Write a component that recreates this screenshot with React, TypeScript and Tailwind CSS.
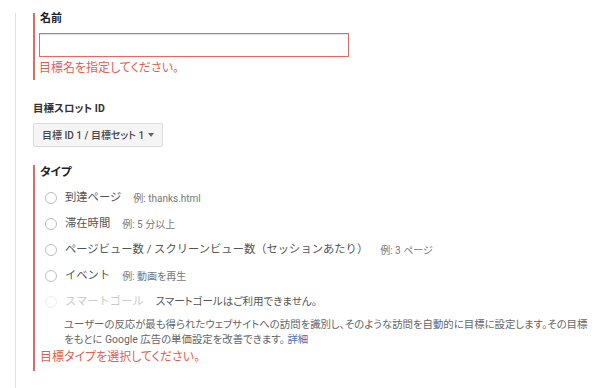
const font = "font-['Roboto','Noto_Sans_CJK_JP',sans-serif] [font-feature-settings:'palt']"

type Choice = { label: string; hint?: string; disabled?: boolean }

const choices: Choice[] = [
  { label: '到達ページ', hint: '例: thanks.html' },
  { label: '滞在時間', hint: '例: 5 分以上' },
  { label: 'ページビュー数 / スクリーンビュー数（セッションあたり）', hint: '例: 3 ページ' },
  { label: 'イベント', hint: '例: 動画を再生' },
  { label: 'スマートゴール', hint: 'スマートゴールはご利用できません。', disabled: true },
]

function Radio({ disabled }: { disabled?: boolean }) {
  return (
    <span
      className={
        disabled
          ? 'size-[12px] shrink-0 rounded-full border-[1.5px] border-[#ededed]'
          : 'size-[12px] shrink-0 rounded-full border-[1.5px] border-[#bdbdbd]'
      }
    />
  )
}

export default function App() {
  return (
    <div className={`${font} h-[388px] w-[600px] overflow-hidden bg-white pt-[13px] pl-[15px]`}>
      <div className="h-full border-l border-[#e0e0e0] pl-[17px]">
        {/* 名前 */}
        <section className="border-l-2 border-[#e8685d] pb-[3px] pl-[4px]">
          <p className="pl-[1px] text-[11px] leading-[12px] font-bold text-[#222]">名前</p>
          <input
            aria-label="名前"
            className="mt-[8px] block h-[24px] w-[310px] border border-[#e8685d] bg-white shadow-[inset_0_1px_1px_rgba(0,0,0,0.12)] outline-none"
          />
          <p className="mt-[2px] text-[12px] leading-[18px] text-[#e45e52]">目標名を指定してください。</p>
        </section>

        {/* 目標スロット ID */}
        <p className="mt-[22px] text-[10.5px] leading-[14px] font-bold text-[#333]">目標スロット ID</p>
        <button className="mt-[7px] flex h-[24px] w-[130px] items-center justify-between rounded-[2px] border border-[#dcdcdc] bg-[#f5f5f5] pr-[8px] pl-[8px] text-[10px] font-medium whitespace-nowrap text-[#444]">
          <span>目標 ID 1 / 目標セット 1</span>
          <span className="h-0 w-0 border-x-[3.5px] border-t-[4px] border-x-transparent border-t-[#666]" />
        </button>

        {/* タイプ */}
        <section className="mt-[18px] border-l-2 border-[#e8685d] pb-[5px] pl-[5px]">
          <p className="text-[11.5px] leading-[15px] font-bold text-[#222]">タイプ</p>
          <ul className="mt-[5px]">
            {choices.map((c) => (
              <li key={c.label} className="flex h-[26px] items-center pl-[5px]">
                <Radio disabled={c.disabled} />
                <span
                  className={
                    c.disabled
                      ? 'ml-[8px] text-[11.3px] text-[#cacaca] [font-feature-settings:normal]'
                      : 'ml-[8px] text-[11.3px] text-[#555] [font-feature-settings:normal]'
                  }
                >
                  {c.label}
                </span>
                <span
                  className={
                    c.disabled
                      ? 'ml-[12px] text-[10.5px] text-[#555]'
                      : 'ml-[12px] text-[10px] text-[#777]'
                  }
                >
                  {c.hint}
                </span>
              </li>
            ))}
          </ul>
          <p className="mt-[2px] pl-[24px] text-[10.4px] leading-[15px] whitespace-nowrap text-[#666]">
            ユーザーの反応が最も得られたウェブサイトへの訪問を識別し、そのような訪問を自動的に目標に設定します。その目標
            <br />
            をもとに Google 広告の単価設定を改善できます。 <a className="text-[#3f6fb5]">詳細</a>
          </p>
          <p className="mt-[1px] text-[12px] leading-[18px] text-[#e45e52]">目標タイプを選択してください。</p>
        </section>
      </div>
    </div>
  )
}
